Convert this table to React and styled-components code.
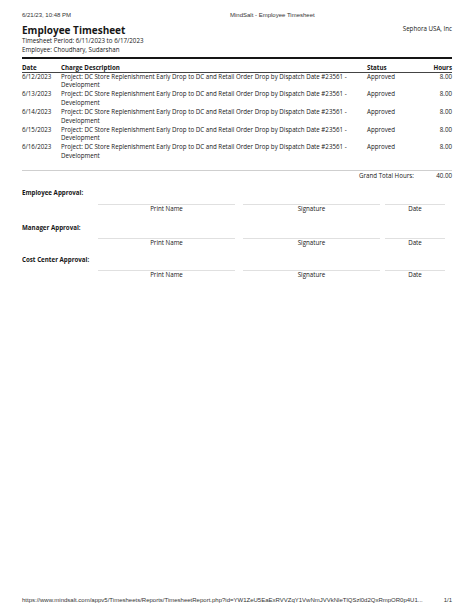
import React from 'react'
import styled, { createGlobalStyle } from 'styled-components'

const GlobalStyle = createGlobalStyle`
  html, body {
    margin: 0;
    padding: 0;
    background: #ffffff;
  }
  body {
    font-family: 'Open Sans', 'Liberation Sans', sans-serif;
    color: #161616;
  }
`

const Page = styled.div`
  width: 474px;
  height: 613px;
  box-sizing: border-box;
  padding: 0 22px;
  display: flex;
  flex-direction: column;
  overflow: hidden;
  background: #fff;
`

const PrintBar = styled.div`
  display: grid;
  grid-template-columns: ${p => (p.$footer ? '1fr 20px' : '208px 1fr')};
  font-family: 'Liberation Sans', Arial, sans-serif;
  font-size: 6px;
  line-height: 8px;
  color: #333;
  white-space: nowrap;
  padding-top: ${p => p.$top || 0}px;
  padding-bottom: ${p => p.$bottom || 0}px;
  margin-top: ${p => (p.$footer ? 'auto' : '0')};
  & span:last-child {
    text-align: ${p => (p.$footer ? 'right' : 'left')};
  }
`

const ReportHead = styled.div`
  display: flex;
  justify-content: space-between;
  align-items: flex-start;
  margin-top: 5.5px;
`

const Title = styled.h1`
  margin: 0;
  font-size: 10px;
  font-weight: 700;
  line-height: 11px;
`

const Meta = styled.div`
  font-size: 6.2px;
  line-height: 9px;
`

const Company = styled.div`
  font-size: 6.2px;
  line-height: 9px;
  margin-top: -1px;
`

const Table = styled.div`
  margin-top: 3.5px;
  border-top: 2px solid #151515;
`

const Row = styled.div`
  display: grid;
  grid-template-columns: 39px 306px 1fr 40px;
  font-size: 6.2px;
  line-height: ${p => (p.$head ? '9px' : '8.85px')};
  font-weight: ${p => (p.$head ? 700 : 400)};
  padding-top: ${p => (p.$head ? '3.5px' : '0')};
  border-bottom: ${p => (p.$head ? '1px solid #444' : 'none')};
  & > span:nth-child(2) {
    padding-right: 12px;
  }
  & > span:last-child {
    text-align: right;
  }
`

const TotalRow = styled.div`
  margin-top: 9px;
  border-top: 1px solid #cfcfcf;
  display: grid;
  grid-template-columns: 1fr auto;
  padding-left: 337px;
  font-size: 6.2px;
  line-height: 9px;
  white-space: nowrap;
`

const Approval = styled.div`
  margin-top: ${p => p.$gap}px;
`

const ApprovalLabel = styled.div`
  font-size: 6.2px;
  line-height: 9px;
  font-weight: 700;
`

const SigRow = styled.div`
  display: grid;
  grid-template-columns: 76px 145px 142px 67px;
  margin-top: 6.5px;
`

const SigCell = styled.div`
  margin-right: ${p => p.$inset}px;
  border-top: 1px solid #e0e0e0;
  font-size: 6.2px;
  line-height: 8px;
  text-align: center;
`

const entries = ['6/12/2023', '6/13/2023', '6/14/2023', '6/15/2023', '6/16/2023']

const approvals = [
  { label: 'Employee Approval:', gap: 8.5 },
  { label: 'Manager Approval:', gap: 9.7 },
  { label: 'Cost Center Approval:', gap: 7.8 }
]

const App = () => {
  return (
    <>
      <GlobalStyle />
      <Page>
        <PrintBar $top={11}>
          <span>6/21/23, 10:48 PM</span>
          <span>MindSalt - Employee Timesheet</span>
        </PrintBar>

        <ReportHead>
          <div>
            <Title>Employee Timesheet</Title>
            <Meta>Timesheet Period: 6/11/2023 to 6/17/2023</Meta>
            <Meta>Employee: Choudhary, Sudarshan</Meta>
          </div>
          <Company>Sephora USA, Inc</Company>
        </ReportHead>

        <Table>
          <Row $head>
            <span>Date</span>
            <span>Charge Description</span>
            <span>Status</span>
            <span>Hours</span>
          </Row>
          {entries.map(day => (
            <Row key={day}>
              <span>{day}</span>
              <span>Project: DC Store Replenishment Early Drop to DC and Retail Order Drop by Dispatch Date #23561 - Development</span>
              <span>Approved</span>
              <span>8.00</span>
            </Row>
          ))}
        </Table>

        <TotalRow>
          <span>Grand Total Hours:</span>
          <span>40.00</span>
        </TotalRow>

        {approvals.map(a => (
          <Approval key={a.label} $gap={a.gap}>
            <ApprovalLabel>{a.label}</ApprovalLabel>
            <SigRow>
              <span />
              <SigCell $inset={8}>Print Name</SigCell>
              <SigCell $inset={5}>Signature</SigCell>
              <SigCell $inset={7}>Date</SigCell>
            </SigRow>
          </Approval>
        ))}

        <PrintBar $footer $bottom={9}>
          <span>https://www.mindsalt.com/appv5/Timesheets/Reports/TimesheetReport.php?id=YW1ZeU5EaExRVVZqY1VwNmJVVkNleTlQSzl0d2QxRmpOR0p4U1...</span>
          <span>1/1</span>
        </PrintBar>
      </Page>
    </>
  )
}

export default App
